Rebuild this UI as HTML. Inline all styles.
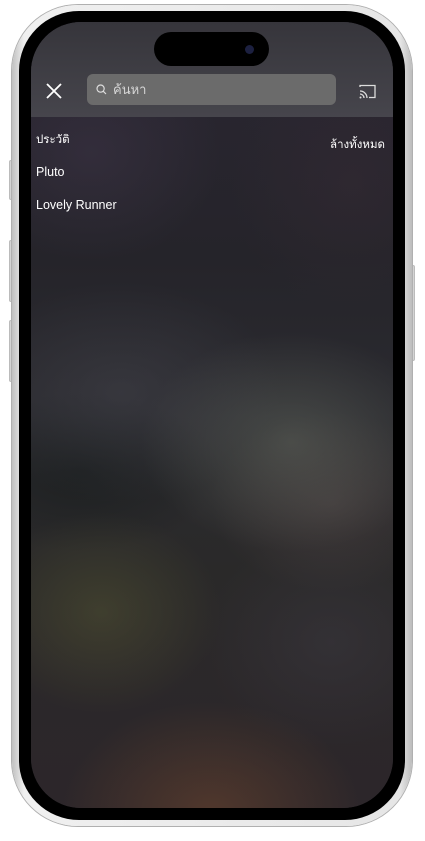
<!DOCTYPE html>
<html><head><meta charset="utf-8"><style>
*{margin:0;padding:0;box-sizing:border-box}
html,body{width:425px;height:841px;background:#fff;overflow:hidden;font-family:"Liberation Sans","Noto Sans CJK SC",sans-serif}
.btn{position:absolute;background:#d4d4d4;border:1px solid #bbb}
.rim{position:absolute;left:12px;top:5px;width:400px;height:821px;border-radius:66px;background:linear-gradient(90deg,#c0c0c0,#f0f0f0 3%,#e6e6e6 97%,#bcbcbc);box-shadow:0 0 0 1px #b0b0b0}
.bez{position:absolute;left:19px;top:11px;width:386px;height:809px;border-radius:60px;background:#000}
.scr{position:absolute;left:31px;top:22px;width:362px;height:786px;border-radius:50px;overflow:hidden;background:#28262c}
.bg{position:absolute;inset:0;background:
radial-gradient(ellipse 150px 110px at 260px 420px,rgba(100,105,95,.5),transparent 100%),
radial-gradient(ellipse 120px 90px at 300px 480px,rgba(95,80,80,.4),transparent 100%),
radial-gradient(ellipse 160px 110px at 90px 370px,rgba(70,70,78,.45),transparent 100%),
radial-gradient(ellipse 120px 100px at 70px 590px,rgba(80,80,50,.55),transparent 100%),
radial-gradient(ellipse 150px 110px at 180px 790px,rgba(100,65,45,.65),transparent 100%),
radial-gradient(ellipse 130px 110px at 60px 130px,rgba(65,55,75,.45),transparent 100%),
radial-gradient(ellipse 120px 130px at 320px 160px,rgba(60,45,55,.35),transparent 100%),
radial-gradient(ellipse 130px 110px at 300px 620px,rgba(60,57,65,.5),transparent 100%),
radial-gradient(ellipse 140px 80px at 50px 450px,rgba(20,25,25,.6),transparent 100%),
linear-gradient(180deg,#2a2632 0%,#25242a 30%,#2b2b30 50%,#2a2929 70%,#2c262a 100%)}
.hdr{position:absolute;left:0;top:0;width:362px;height:95px;background:linear-gradient(180deg,#36353b,#46454c)}
.di{position:absolute;left:123px;top:10px;width:115px;height:34px;border-radius:17px;background:#000}
.cam{position:absolute;left:91px;top:13px;width:9px;height:9px;border-radius:50%;background:#1c2040}
.search{position:absolute;left:56px;top:52px;width:249px;height:31px;border-radius:6px;background:#6b6b6b;color:#d6d6d6;font-size:13px;line-height:31px;padding-left:26px}
.t{position:absolute;color:#fff}
</style></head><body>
<div class="btn" style="left:9px;top:160px;width:4px;height:40px;border-radius:2px"></div>
<div class="btn" style="left:9px;top:240px;width:4px;height:62px;border-radius:2px"></div>
<div class="btn" style="left:9px;top:320px;width:4px;height:62px;border-radius:2px"></div>
<div class="btn" style="left:411px;top:265px;width:4px;height:96px;border-radius:2px"></div>
<div class="rim"></div>
<div class="bez"></div>
<div class="scr">
<div class="bg"></div>
<div class="hdr"></div>
<div class="di"><div class="cam"></div></div>
<svg style="position:absolute;left:14px;top:60px" width="18" height="18" viewBox="0 0 18 18"><path d="M2 2L16 16M16 2L2 16" stroke="#fff" stroke-width="1.8" fill="none"/></svg>
<div class="search">ค้นหา</div>
<svg style="position:absolute;left:65px;top:62px" width="11" height="11" viewBox="0 0 11 11"><circle cx="4.6" cy="4.6" r="3.6" stroke="#ddd" stroke-width="1.2" fill="none"/><path d="M7.3 7.3L10 10" stroke="#ddd" stroke-width="1.2"/></svg>
<svg style="position:absolute;left:327px;top:61px" width="20" height="18" viewBox="0 0 20 18"><path d="M2 4V2.5h15v12H11" stroke="#ddd" stroke-width="1.3" fill="none"/><path d="M2 8a7 7 0 0 1 7 7M2 11a4 4 0 0 1 4 4" stroke="#ddd" stroke-width="1.3" fill="none"/><circle cx="2.5" cy="14.5" r="1" fill="#ddd"/></svg>
<div class="t" style="left:5px;top:109px;font-size:11.5px">ประวัติ</div>
<div class="t" style="right:8px;top:114px;font-size:11.5px">ล้างทั้งหมด</div>
<div class="t" style="left:5px;top:143px;font-size:12.5px">Pluto</div>
<div class="t" style="left:5px;top:176px;font-size:12.5px">Lovely Runner</div>
</div>
</body></html>
